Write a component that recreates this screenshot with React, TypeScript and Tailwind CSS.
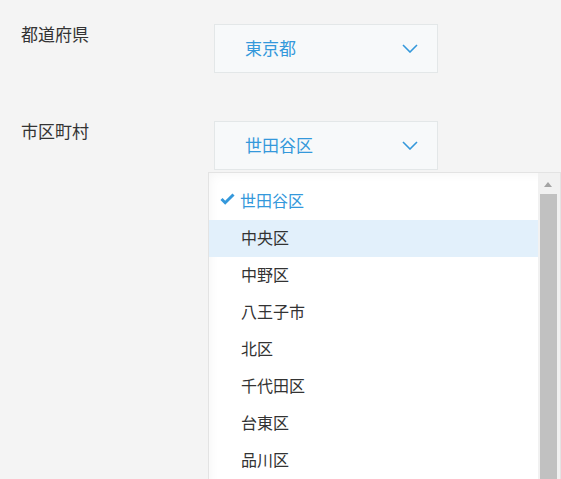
import React from "react";

const cities = ["世田谷区", "中央区", "中野区", "八王子市", "北区", "千代田区", "台東区", "品川区"];

function Chevron() {
  return (
    <svg width="16" height="9" viewBox="0 0 16 9" className="shrink-0">
      <path d="M1 1 L8 8 L15 1" fill="none" stroke="#3498db" strokeWidth="1.6" />
    </svg>
  );
}

function Check() {
  return (
    <svg width="15" height="12" viewBox="0 0 15 12">
      <path d="M1.5 6 L5.2 9.7 L13.5 1.5" fill="none" stroke="#3498db" strokeWidth="3" strokeLinejoin="miter" />
    </svg>
  );
}

function Select({ value, children }: { value: string; children?: React.ReactNode }) {
  return (
    <div className="relative">
      <div className="flex items-center justify-between w-[224px] h-[49px] border border-[#e3e7e8] bg-[#f7f9fa] pl-[30px] pr-[19px]">
        <span className="text-[17px] leading-[21px] text-[#3498db] -mt-[2px]">{value}</span>
        <Chevron />
      </div>
      {children}
    </div>
  );
}

export default function App() {
  const selected = "世田谷区";
  const hovered = "中央区";

  return (
    <div
      className="relative w-[561px] h-[479px] overflow-hidden bg-[#f4f4f4] text-[#333333]"
      style={{ fontFamily: '"Noto Sans CJK JP", "Noto Sans", sans-serif' }}
    >
      <div className="flex flex-col gap-[48px] pt-[24px] pl-[21px]">
        <div className="flex items-start">
          <div className="w-[193px] -mt-[1px] text-[17px] leading-[21px]">都道府県</div>
          <Select value="東京都" />
        </div>
        <div className="flex items-start">
          <div className="w-[193px] -mt-[1px] text-[17px] leading-[21px]">市区町村</div>
          <Select value="世田谷区">
            <div className="absolute left-[-6px] top-[51px] w-[353px] h-[400px] flex border border-[#e3e3e3] bg-white shadow-[inset_0_0_12px_rgba(0,0,0,0.05)]">
              <ul className="flex-1 pt-[10px]">
                {cities.map((c) => (
                  <li
                    key={c}
                    className={
                      "relative h-[37px] flex items-center pl-[32px] text-[16px] " +
                      (c === hovered ? "bg-[#e2f0fb] " : "") +
                      (c === selected ? "text-[#3498db]" : "text-[#333333]")
                    }
                  >
                    {c === selected && (
                      <span className="absolute left-[11px] top-[10px]">
                        <Check />
                      </span>
                    )}
                    <span className={"-mt-[3px] " + (c === selected ? "-ml-[1px]" : "")}>{c}</span>
                  </li>
                ))}
              </ul>
              <div className="w-[22px] bg-[#f1f1f1] flex flex-col">
                <div className="h-[21px] flex items-center justify-start pl-[6px] pt-[2px]">
                  <div className="w-0 h-0 border-l-[4px] border-r-[4px] border-b-[5px] border-l-transparent border-r-transparent border-b-[#a3a3a3]" />
                </div>
                <div className="ml-[2px] w-[17px] flex-1 bg-[#c1c1c1]" />
              </div>
            </div>
          </Select>
        </div>
      </div>
    </div>
  );
}
